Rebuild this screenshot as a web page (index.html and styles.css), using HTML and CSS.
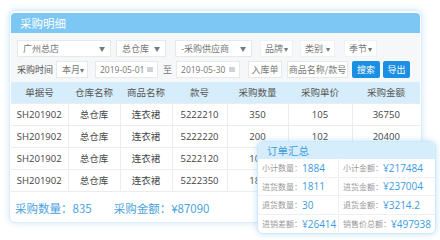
FILE: index.html
```html
<!DOCTYPE html>
<html lang="zh-CN">
<head>
  <meta charset="UTF-8">
  <title>采购明细</title>
  <link rel="stylesheet" href="styles.css">
</head>
<body>

<div class="card">
  <div class="card-title">采购明细</div>

  <div class="filters">
    <div class="filter-row">
      <span class="sel w-store">广州总店<i class="tri">▼</i></span>
      <span class="sel w-wh">总仓库<i class="tri">▼</i></span>
      <span class="sel w-sup">-采购供应商<i class="tri">▼</i></span>
      <span class="drop w-brand">品牌<i class="caret">▾</i></span>
      <span class="drop w-cat">类别<i class="caret">▾</i></span>
      <span class="drop w-season">季节<i class="caret">▾</i></span>
    </div>
    <div class="filter-row">
      <span class="label">采购时间</span>
      <span class="sel w-month">本月<i class="caret">▾</i></span>
      <span class="sel w-date">2019-05-01<i class="cal"></i></span>
      <span class="to">至</span>
      <span class="sel w-date w-date2">2019-05-30<i class="cal"></i></span>
      <span class="sel w-in">入库单</span>
      <span class="sel w-key">商品名称/款号</span>
      <span class="btn w-search">搜索</span>
      <span class="btn w-export">导出</span>
    </div>
  </div>

  <table class="grid">
    <thead>
      <tr>
        <th>单据号</th><th>仓库名称</th><th>商品名称</th><th>款号</th>
        <th>采购数量</th><th>采购单价</th><th>采购金额</th>
      </tr>
    </thead>
    <tbody>
      <tr><td>SH201902</td><td>总仓库</td><td>连衣裙</td><td>5222210</td><td>350</td><td>105</td><td>36750</td></tr>
      <tr><td>SH201902</td><td>总仓库</td><td>连衣裙</td><td>5222220</td><td>200</td><td>102</td><td>20400</td></tr>
      <tr><td>SH201902</td><td>总仓库</td><td>连衣裙</td><td>5222120</td><td>100</td><td>108</td><td>10800</td></tr>
      <tr><td>SH201902</td><td>总仓库</td><td>连衣裙</td><td>5222350</td><td>185</td><td>104</td><td>19240</td></tr>
    </tbody>
  </table>

  <div class="totals">
    <span>采购数量：835</span>
    <span>采购金额：¥87090</span>
  </div>
</div>

<div class="summary">
  <div class="summary-title">订单汇总</div>
  <div class="summary-grid">
    <div class="cell"><span class="k">小计数量：</span><span class="v">1884</span></div>
    <div class="cell"><span class="k">小计金额：</span><span class="v">¥217484</span></div>
    <div class="cell"><span class="k">进货数量：</span><span class="v">1811</span></div>
    <div class="cell"><span class="k">进货金额：</span><span class="v">¥237004</span></div>
    <div class="cell"><span class="k">退货数量：</span><span class="v">30</span></div>
    <div class="cell"><span class="k">退货金额：</span><span class="v">¥3214.2</span></div>
    <div class="cell"><span class="k">进销差额：</span><span class="v">¥26414</span></div>
    <div class="cell"><span class="k">销售价总额：</span><span class="v">¥497938</span></div>
  </div>
</div>

</body>
</html>
```

FILE: styles.css
```css
* { box-sizing: border-box; }
body {
  margin: 0;
  padding: 10px 18px 0 9px;
  background: #fff;
  color: #555;
  font-family: "Noto Sans CJK SC", "Noto Sans", sans-serif;
  font-size: 9px;
  position: relative;
  width: 440px;
  height: 240px;
  overflow: hidden;
}
.card {
  width: 413px;
  height: 213px;
  background: #fff;
  border: 1px solid #d9edfb;
  border-radius: 6px;
  box-shadow: 0 0 6px rgba(120, 190, 240, 0.35);
  padding: 2px 1px 0;
}
.card-title {
  height: 20px;
  line-height: 20px;
  background: #7dc7f5;
  color: #fff;
  font-size: 11.5px;
  padding-left: 9px;
  border-radius: 4px 4px 0 0;
}
.filters {
  background: #f6f7f9;
  padding: 7px 6px 4px 6px;
  display: flex;
  flex-direction: column;
  gap: 4px;
}
.filter-row {
  display: flex;
  align-items: center;
  height: 17px;
}
.sel, .drop {
  height: 17px;
  line-height: 17px;
  background: #fff;
  border: 1px solid #e6e8ea;
  color: #777;
  padding: 0 5px;
  display: flex;
  align-items: center;
  justify-content: space-between;
  white-space: nowrap;
  overflow: hidden;
}
.drop { padding: 0 4px; border-color: #f0f1f3; }
.tri, .caret {
  font-style: normal;
  font-size: 6px;
  color: #777;
}
.caret { font-size: 8px; }
.w-store { width: 94px; }
.w-wh { width: 50px; margin-left: 5px; }
.w-sup { width: 77px; margin-left: 9px; }
.w-brand { width: 33px; margin-left: 8px; }
.w-cat { width: 35px; margin-left: 7px; }
.w-season { width: 33px; margin-left: 9px; }
.label { color: #555; width: 35px; white-space: nowrap; }
.w-month { width: 32px; margin-left: 4px; }
.w-date { width: 63px; margin-left: 7px; font-family: "Open Sans", sans-serif; font-size: 8.5px; padding: 0 4px; }
.w-date2 { width: 64px; margin-left: 4px; }
.to { color: #777; margin-left: 5px; }
.w-in { width: 34px; margin-left: 8px; justify-content: center; }
.w-key { width: 61px; margin-left: 5px; justify-content: center; padding: 0 1px; }
.cal {
  width: 6px;
  height: 5px;
  background: #cfd3d8;
}
.btn {
  height: 17px;
  line-height: 17px;
  text-align: center;
  background: #1a8fe3;
  color: #fff;
  border-radius: 2px;
}
.w-search { width: 28px; margin-left: 4px; }
.w-export { width: 27px; margin-left: 3px; }

.grid {
  width: 100%;
  border-collapse: collapse;
  table-layout: fixed;
  font-size: 9.5px;
}
.grid th {
  height: 21px;
  background: #d6edfb;
  font-weight: normal;
  color: #555;
}
.grid td {
  height: 22px;
  text-align: center;
  border: 1px solid #ececec;
  color: #444;
  font-family: "Open Sans", "Noto Sans CJK SC", sans-serif;
}
.grid th:nth-child(1) { width: 57px; }
.grid th:nth-child(2) { width: 52px; }
.grid th:nth-child(3) { width: 52px; }
.grid th:nth-child(4) { width: 55px; }
.grid th:nth-child(5) { width: 61px; }
.grid th:nth-child(6) { width: 64px; }
.grid td:first-child { border-left: none; }
.grid td:last-child { border-right: none; }

.totals {
  display: flex;
  gap: 22px;
  padding: 8px 0 0 4px;
  color: #4ba3dd;
  font-size: 11.5px;
}

.summary {
  position: absolute;
  left: 257px;
  top: 141px;
  width: 179px;
  height: 93px;
  background: #fff;
  border: 1px solid #cfe7f8;
  border-radius: 6px;
  box-shadow: 0 0 6px rgba(120, 190, 240, 0.45);
  overflow: hidden;
}
.summary-title {
  height: 17px;
  line-height: 17px;
  background: #d6edfb;
  color: #3f9be0;
  font-size: 10.5px;
  padding-left: 9px;
}
.summary-grid {
  display: grid;
  grid-template-columns: 81px 1fr;
}
.cell {
  height: 18.5px;
  display: flex;
  align-items: center;
  padding-left: 4px;
  border-bottom: 1px solid #eef0f2;
  white-space: nowrap;
}
.cell:nth-child(odd) { border-right: 1px solid #eef0f2; }
.cell:nth-last-child(-n+2) { border-bottom: none; }
.k { color: #999; font-size: 8px; }
.v { color: #3d9be0; font-size: 10px; font-family: "Open Sans", sans-serif; }
```
